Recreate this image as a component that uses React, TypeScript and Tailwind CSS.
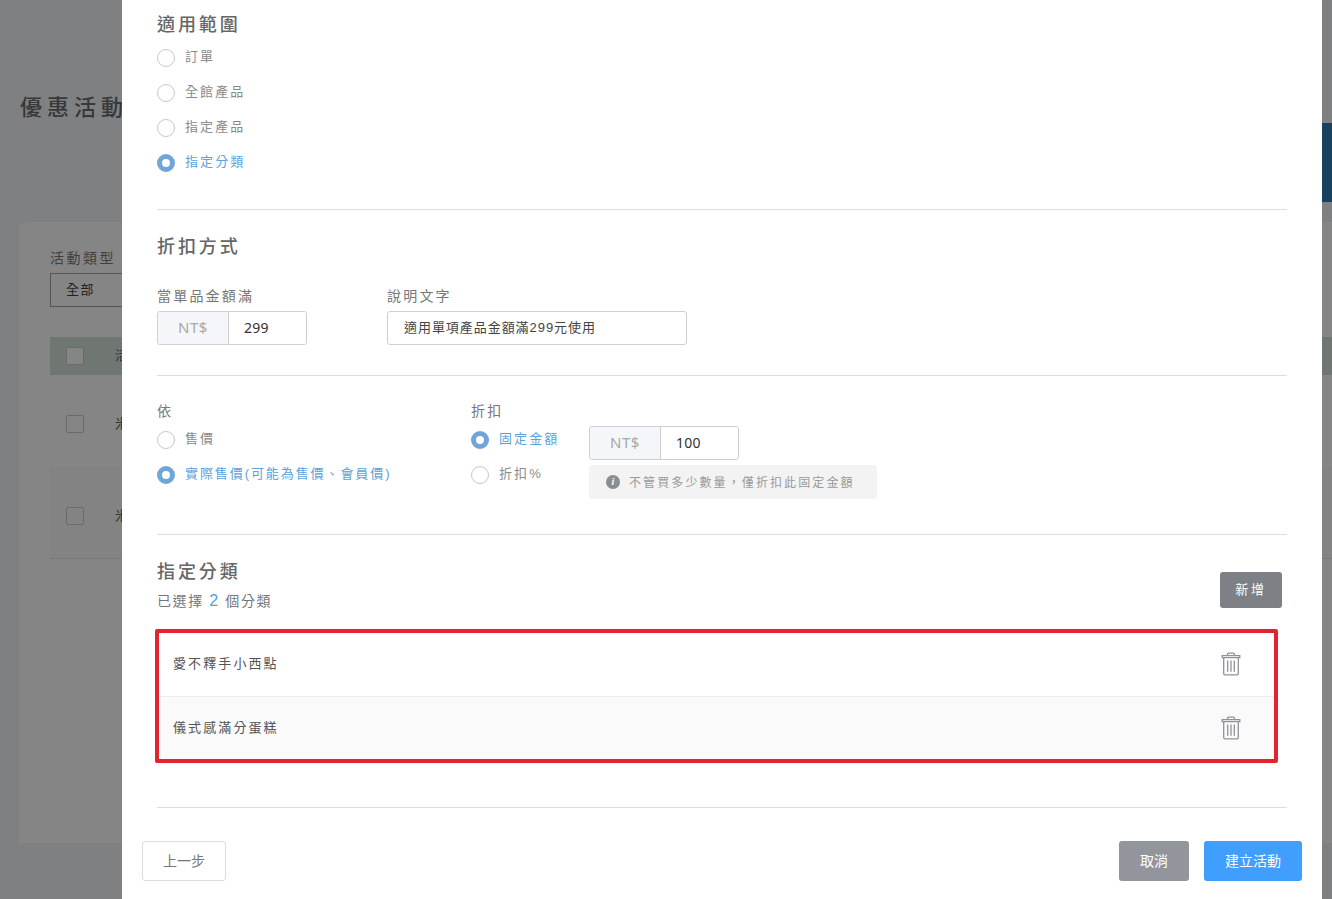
const font = { fontFamily: '"Liberation Sans", "Noto Sans CJK TC", sans-serif' };
const latin = { fontFamily: '"Noto Sans", "Noto Sans CJK TC", sans-serif' };

function Radio({ label, checked, tight }: { label: string; checked?: boolean; tight?: boolean }) {
  return (
    <div className="flex h-[35px] items-center">
      {checked ? (
        <span className="box-border h-[18px] w-[18px] shrink-0 rounded-full border-[5px] border-[#6fa5d9] bg-white" />
      ) : (
        <span className="box-border h-[18px] w-[18px] shrink-0 rounded-full border border-[#c8c8c8] bg-white" />
      )}
      <span className={`ml-[10px] -mt-[2px] whitespace-nowrap text-[13px] ${tight ? 'tracking-[1.92px]' : 'tracking-[2.1px]'} ${checked ? 'text-[#5aa2de]' : 'text-[#8a8a8a]'}`}>
        {label}
      </span>
    </div>
  );
}

function Heading({ children }: { children: string }) {
  return <h3 className="text-[18px] leading-[24px] font-medium tracking-[2.9px] text-[#666666]">{children}</h3>;
}

function Label({ children }: { children: string }) {
  return <div className="text-[14px] leading-[20px] tracking-[2.2px] text-[#777777]">{children}</div>;
}

function Money({ value }: { value: string }) {
  return (
    <div className="box-border flex h-[34px] w-[150px] overflow-hidden rounded-[3px] border border-[#cfcfd2]" style={latin}>
      <div className="flex w-[71px] items-center justify-center border-r border-[#cfcfd2] bg-[#f4f6fa] pb-[1px] text-[15px] tracking-[0.5px] text-[#a8a8a8]">NT$</div>
      <div className="flex flex-1 items-center bg-white pb-[1px] pl-[15px] text-[14px] tracking-[0.2px] text-[#333333]">{value}</div>
    </div>
  );
}

function Trash() {
  return (
    <svg width="20" height="24" viewBox="0 0 20 24" fill="none" stroke="#8f9399" strokeWidth="1.3">
      <path d="M6.5 3.5V2.2q0-1 1-1h5q1 0 1 1v1.3" />
      <path d="M1.2 3.6h17.6v2H1.2z" />
      <path d="M2.7 5.6v15.8q0 1.4 1.4 1.4h11.8q1.4 0 1.4-1.4V5.6" />
      <path d="M6.7 8.6v11.2M10 8.6v11.2M13.3 8.6v11.2" />
    </svg>
  );
}

function Row({ name, alt }: { name: string; alt?: boolean }) {
  return (
    <div className={`flex h-[63px] items-center justify-between pl-[14px] pr-[33px] ${alt ? 'border-t border-[#ececec] bg-[#fafafa]' : 'bg-white pb-[2px]'}`}>
      <span className="text-[13px] tracking-[2.1px] text-[#555555]">{name}</span>
      <Trash />
    </div>
  );
}

function Background() {
  return (
    <div className="absolute inset-0 bg-[#7e8082]">
      <div className="pl-[20px] pt-[94px] text-[22px] leading-[28px] font-medium tracking-[5px] text-[#36383a]">優惠活動</div>
      <div className="ml-[19px] mt-[100px] h-[621px] rounded-tl-[8px] bg-[#858585] pl-[31px] pt-[26px]">
        <div className="text-[14px] leading-[20px] tracking-[2.5px] text-[#3f3f3f]">活動類型</div>
        <div className="mt-[5px] box-border flex h-[34px] w-[200px] items-center border border-[#555555] pl-[15px] text-[13px] tracking-[1.5px] text-[#222222]">全部</div>
        <div className="mt-[30px] flex h-[38px] items-center bg-[#707672] pl-[16px]">
          <span className="box-border h-[18px] w-[18px] rounded-[2px] border border-[#6a6a6a] bg-[#858585]" />
          <span className="ml-[31px] text-[13px] text-[#333333]">活動</span>
        </div>
        <div className="flex h-[92px] items-center pl-[16px] pt-[6px]">
          <span className="box-border h-[18px] w-[18px] rounded-[2px] border border-[#6a6a6a]" />
          <span className="ml-[31px] text-[13px] text-[#333333]">米</span>
        </div>
        <div className="flex h-[92px] items-center border-b border-[#777777] bg-[#838383] pl-[16px] pt-[6px]">
          <span className="box-border h-[18px] w-[18px] rounded-[2px] border border-[#6a6a6a]" />
          <span className="ml-[31px] text-[13px] text-[#333333]">米</span>
        </div>
      </div>
      <div className="absolute right-0 top-[123px] h-[79px] w-[10px] bg-[#17415f]" />
    </div>
  );
}

export default function App() {
  return (
    <div className="relative h-[899px] w-[1332px] overflow-hidden" style={font}>
      <Background />
      <div className="absolute bottom-0 left-[122px] top-0 box-border w-[1200px] bg-white px-[35px] pt-[13px]">
        <Heading>適用範圍</Heading>
        <div className="mt-[3px]">
          <Radio label="訂單" />
          <Radio label="全館產品" />
          <Radio label="指定產品" />
          <Radio label="指定分類" checked />
        </div>
        <div className="mt-[29px] h-px bg-[#dddddd]" />

        <div className="mt-[25px]"><Heading>折扣方式</Heading></div>
        <div className="mt-[27px] flex gap-[80px]">
          <div>
            <Label>當單品金額滿</Label>
            <div className="mt-[5px]"><Money value="299" /></div>
          </div>
          <div>
            <Label>說明文字</Label>
            <div className="mt-[5px] box-border flex h-[34px] w-[300px] items-center rounded-[3px] border border-[#cfcfd2] pl-[16px] text-[13px] tracking-[0.95px] text-[#444444]">適用單項產品金額滿299元使用</div>
          </div>
        </div>
        <div className="mt-[30px] h-px bg-[#dddddd]" />

        <div className="mt-[25px] flex">
          <div className="w-[314px]">
            <Label>依</Label>
            <div className="mt-[1px]">
              <Radio label="售價" />
              <Radio label="實際售價(可能為售價、會員價)" checked tight />
            </div>
          </div>
          <div className="w-[118px]">
            <Label>折扣</Label>
            <div className="mt-[1px]">
              <Radio label="固定金額" checked />
              <Radio label="折扣%" />
            </div>
          </div>
          <div className="pt-[25px]">
            <Money value="100" />
            <div className="mt-[5px] flex h-[34px] w-[288px] items-center rounded-[3px] bg-[#f3f3f3] pl-[17px]">
              <span className="flex h-[14px] w-[14px] items-center justify-center rounded-full bg-[#8a8d91] text-[10px] font-bold italic leading-none text-white" style={{ fontFamily: '"Liberation Serif", serif' }}>i</span>
              <span className="ml-[9px] mt-[1px] text-[12px] tracking-[2.1px] text-[#999999]">{"不管買多少數量\uFF0C僅折扣此固定金額"}</span>
            </div>
          </div>
        </div>
        <div className="mt-[35px] h-px bg-[#dddddd]" />

        <div className="mt-[25px] flex items-start justify-between pr-[5px]">
          <div>
            <Heading>指定分類</Heading>
            <div className="mt-[7px] text-[14px] leading-[20px] tracking-[1.6px] text-[#777777]">
              已選擇 <span className="text-[16px] text-[#4f9fdc]">2</span> 個分類
            </div>
          </div>
          <button className="mt-[12px] h-[36px] w-[62px] rounded-[3px] bg-[#7d8084] text-[13px] tracking-[2.8px] text-white">新增</button>
        </div>

        <div className="-ml-[2px] mt-[18px] box-border w-[1123px] rounded-[2px] border-[4px] border-[#e32430]">
          <Row name="愛不釋手小西點" />
          <Row name="儀式感滿分蛋糕" alt />
        </div>
        <div className="mt-[44px] h-px bg-[#dddddd]" />

        <div className="-mx-[15px] mt-[33px] flex items-center">
          <button className="box-border h-[40px] w-[84px] rounded-[3px] border border-[#dddddd] bg-white text-[14px] text-[#777777]">上一步</button>
          <button className="ml-auto h-[40px] w-[70px] rounded-[3px] bg-[#92959b] text-[14px] text-white">取消</button>
          <button className="ml-[15px] h-[40px] w-[98px] rounded-[3px] bg-[#409eff] text-[14px] text-white">建立活動</button>
        </div>
      </div>
    </div>
  );
}
